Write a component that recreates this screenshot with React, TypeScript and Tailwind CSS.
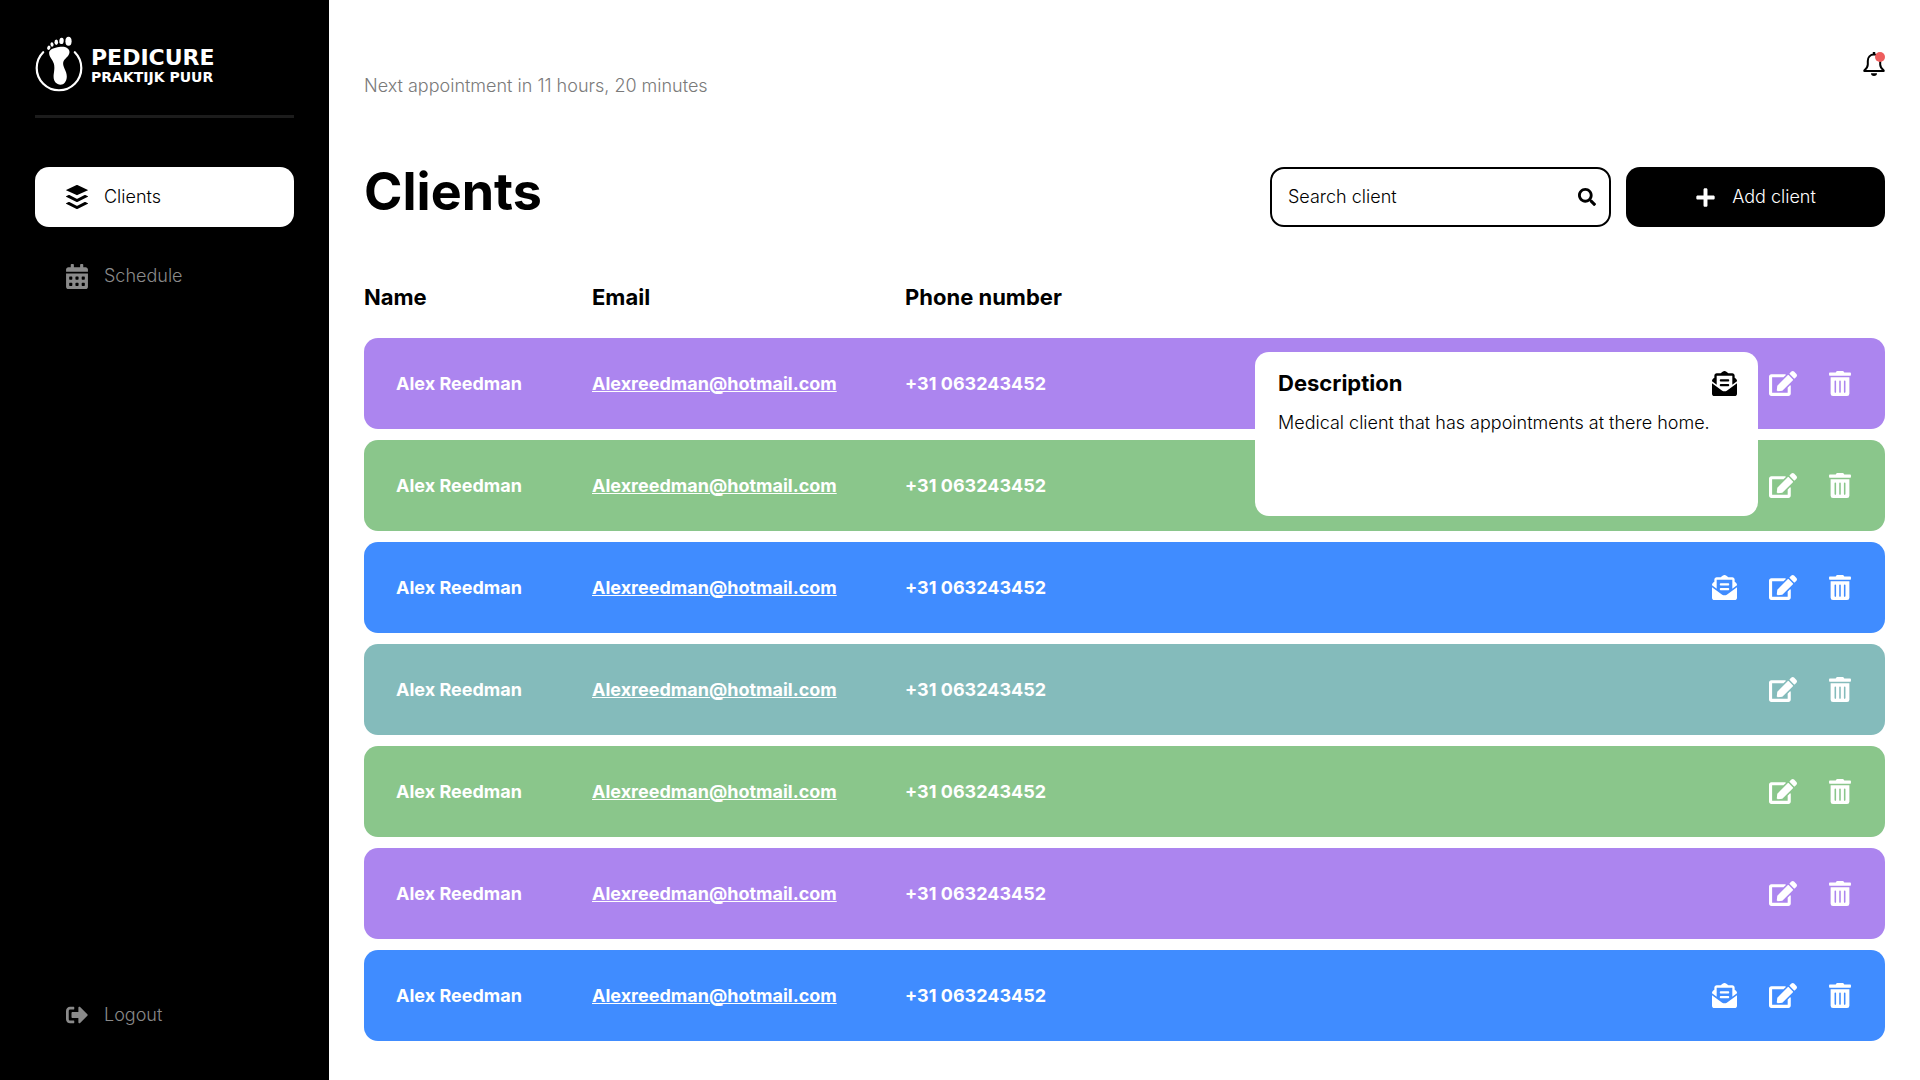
import { FaBuffer, FaCalendarAlt, FaSignOutAlt, FaSearch, FaPlus, FaEnvelopeOpenText, FaEdit, FaTrashAlt } from "react-icons/fa";

type Client = { color: string; note?: boolean; open?: boolean };

const clients: Client[] = [
  { color: "bg-[#ac85ef]", note: true, open: true },
  { color: "bg-[#8ac68b]" },
  { color: "bg-[#408cff]", note: true },
  { color: "bg-[#84bbbb]" },
  { color: "bg-[#8ac68b]" },
  { color: "bg-[#ac85ef]" },
  { color: "bg-[#408cff]", note: true },
];

function Logo() {
  return (
    <div className="flex h-14 items-center gap-2 text-white">
      <svg viewBox="0 0 48 56" className="h-14 w-12 shrink-0" fill="currentColor" aria-hidden="true">
        <path d="M8.2 16.2A22.3 22.3 0 1 0 39.8 16.2" fill="none" stroke="currentColor" strokeWidth="2.2" strokeLinecap="round" />
        <path d="M24 11c5 -1.200 10.800 .6 10.500 5.300c-.3 4.700-5.500 6.200-6.300 10.200c-.8 4.300 3.900 8.800 3.600 14.200c-.2 4.600-2.700 8-6.300 8c-4 0-6.900-3.600-6.900-7.700c0-4.200 1.600-8.300 .2-13.400c-1.100-3.900-4.800-6.400-4.700-10.800c.1-3.500 5.500-5.200 9.900-5.800z" />
        <ellipse cx="33.500" cy="5.300" rx="3.100" ry="4.500" />
        <ellipse cx="26.500" cy="4.900" rx="2.200" ry="3.200" transform="rotate(6 26.500 4.900)" />
        <ellipse cx="21.300" cy="6.300" rx="1.800" ry="2.700" />
        <ellipse cx="17" cy="8.500" rx="1.500" ry="2.300" transform="rotate(-8 17 8.500)" />
        <ellipse cx="13.800" cy="11.700" rx="1.600" ry="2.200" transform="rotate(20 13.800 11.700)" />
      </svg>
      <p className="pt-1 font-['DejaVu_Sans',sans-serif] font-bold uppercase">
        <span className="block text-[22px] leading-[22px]">Pedicure</span>
        <span className="block text-sm leading-4">Praktijk Puur</span>
      </p>
    </div>
  );
}

function Bell() {
  return (
    <svg viewBox="0 0 22 24" className="h-6 w-[22px]" aria-hidden="true">
      <path d="M11 2.500C7.200 2.500 4.800 5.200 4.800 9v3.500c0 2.400-1.400 4.200-3.500 6v.5h19.400v-.5c-2.100-1.800-3.500-3.600-3.500-6V9C17.200 5.200 14.800 2.500 11 2.500z" fill="none" stroke="#000" strokeWidth="2" strokeLinejoin="round" />
      <path d="M9.800 0h2.400v2.500H9.800zM8 21.300h6a3 2.600 0 0 1-6 0z" />
      <circle cx="17" cy="5" r="5" fill="#ee5d5d" />
    </svg>
  );
}

function Description() {
  return (
    <div role="tooltip" className="absolute top-[14px] right-[127px] z-10 h-[164px] w-[503px] rounded-[14px] bg-white px-[23px] pt-[15px] text-left text-black">
      <h2 className="text-[22px] leading-8 font-bold">Description</h2>
      <p className="mt-3 text-lg leading-6 font-light">Medical client that has appointments at there home.</p>
    </div>
  );
}

export default function App() {
  return (
    <div className="flex min-h-screen bg-white font-['Inter',sans-serif] text-lg font-light text-black">
      <aside className="flex w-[329px] shrink-0 flex-col bg-black px-[35px] pt-9 pb-[35px]">
        <Logo />
        <hr className="mt-[23px] border-0 border-t-[3px] border-[#1c1c1c]" />
        <nav className="mt-[49px] flex flex-col gap-[19px]">
          <a href="#clients" aria-current="page" className="flex h-[60px] items-center gap-[15px] rounded-[14px] bg-white px-[30px]">
            <FaBuffer className="h-7 w-6" />
            Clients
          </a>
          <a href="#schedule" className="flex h-[60px] items-center gap-4 px-[31px] text-[#8a8a8a]">
            <FaCalendarAlt className="h-[25px] w-[22px]" />
            Schedule
          </a>
        </nav>
        <button type="button" className="mt-auto flex h-[60px] items-center gap-4 px-[31px] text-[#8a8a8a]">
          <FaSignOutAlt className="size-[22px]" />
          Logout
        </button>
      </aside>

      <main className="min-w-0 flex-1 px-[35px] pt-[52px]">
        <header className="flex items-start justify-between">
          <p className="pt-[22px] leading-6 text-[#7a7a7a]">Next appointment in 11 hours, 20 minutes</p>
          <button type="button" aria-label="Notifications">
            <Bell />
          </button>
        </header>

        <section className="mt-[69px] flex items-start justify-between">
          <h1 className="text-[52px] leading-[50px] font-bold">Clients</h1>
          <form className="flex gap-[15px]" onSubmit={(e) => e.preventDefault()}>
            <label className="flex h-[60px] w-[341px] items-center gap-2 rounded-[14px] border-2 border-black pr-[13px] pl-4">
              <input type="text" aria-label="Search client" placeholder="Search client" className="min-w-0 flex-1 outline-none placeholder:text-black" />
              <FaSearch className="size-[18px]" />
            </label>
            <button type="button" className="flex h-[60px] w-[259px] items-center justify-center gap-4 rounded-[14px] bg-black text-white">
              <FaPlus className="size-[21px]" />
              Add client
            </button>
          </form>
        </section>

        <table className="mt-[43px] w-full table-fixed border-separate border-spacing-x-0 border-spacing-y-[11px] text-left">
          <colgroup>
            <col className="w-[228px]" />
            <col className="w-[313px]" />
            <col />
            <col className="w-[240px]" />
          </colgroup>
          <thead>
            <tr className="h-[46px] align-top text-[22px] leading-8 font-bold">
              <th scope="col">Name</th>
              <th scope="col">Email</th>
              <th scope="col">Phone number</th>
              <th scope="col" aria-label="Actions" />
            </tr>
          </thead>
          <tbody>
            {clients.map((c, i) => (
              <tr key={i} className="relative h-[91px] font-bold text-white">
                <td className={`rounded-l-[14px] pl-8 ${c.color}`}>Alex Reedman</td>
                <td className={c.color}>
                  <a href="mailto:Alexreedman@hotmail.com" className="underline decoration-1 underline-offset-1">Alexreedman@hotmail.com</a>
                </td>
                <td className={c.color}>+31 063243452</td>
                <td className={`rounded-r-[14px] pr-[34px] ${c.color}`}>
                  {c.open && <Description />}
                  <div className="flex items-center justify-end gap-8">
                    {c.note && (
                      <button type="button" aria-label="Show description" className={c.open ? "relative z-20 text-black" : "relative"}>
                        <FaEnvelopeOpenText className="size-[25px]" />
                      </button>
                    )}
                    <button type="button" aria-label="Edit client">
                      <FaEdit className="h-[25px] w-7" />
                    </button>
                    <button type="button" aria-label="Delete client">
                      <FaTrashAlt className="h-[25px] w-[22px]" />
                    </button>
                  </div>
                </td>
              </tr>
            ))}
          </tbody>
        </table>
      </main>
    </div>
  );
}
